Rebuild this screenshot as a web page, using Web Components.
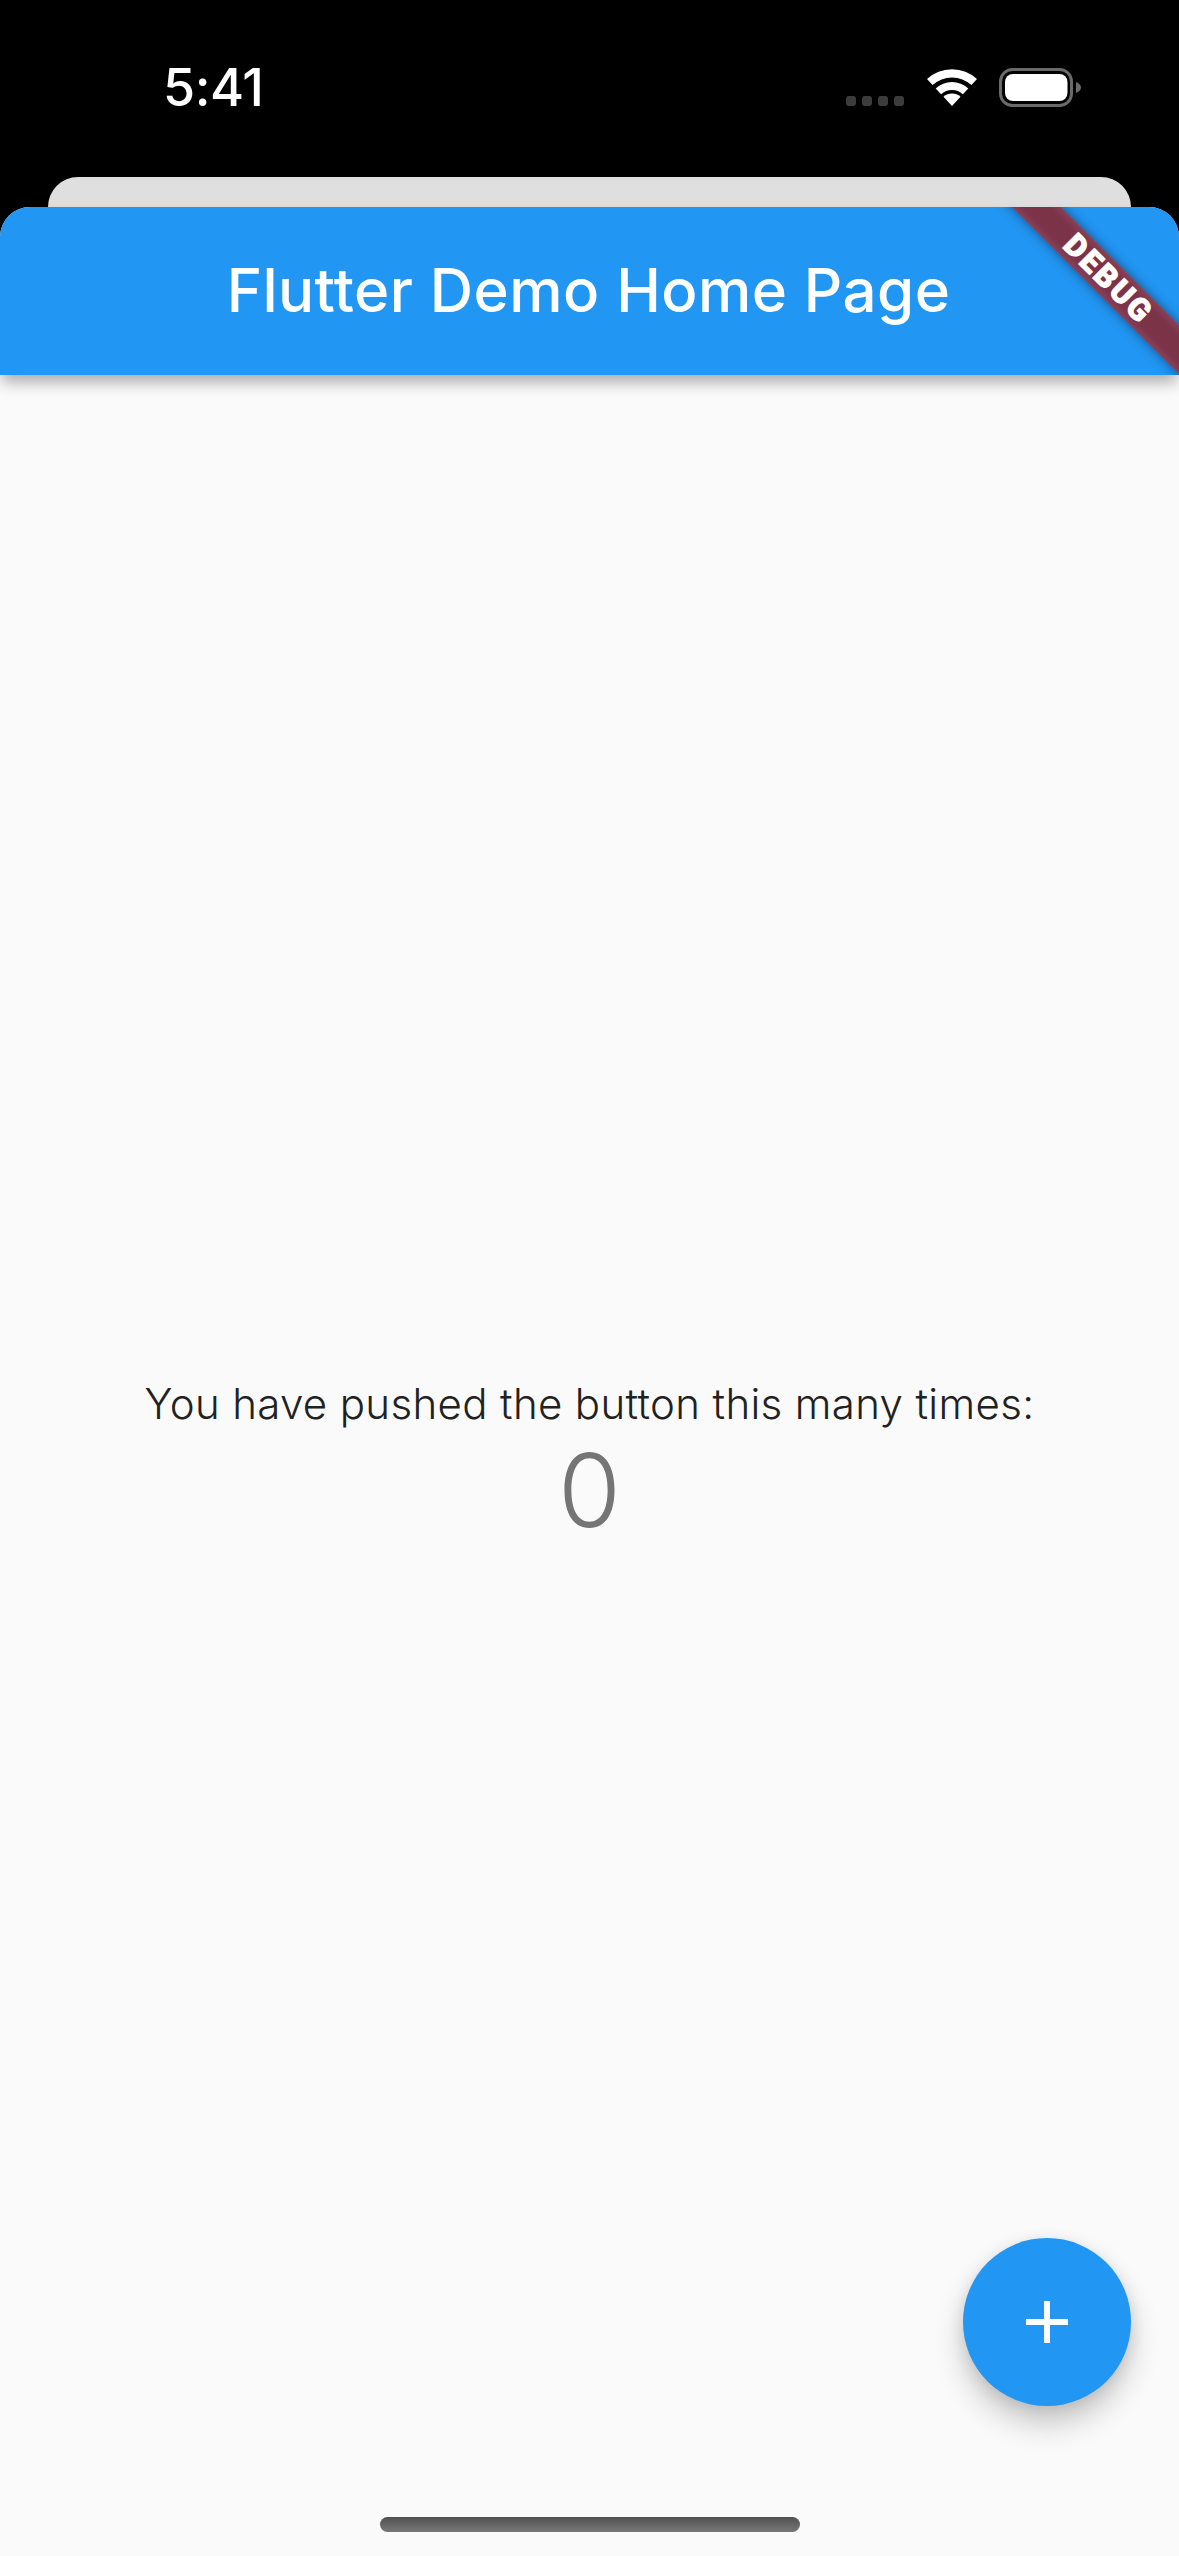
<!DOCTYPE html>
<html lang="en">
<head>
<meta charset="utf-8">
<title>Flutter Demo Home Page</title>
<style>
  html, body { margin: 0; background: #000; }
  body { font-family: "Inter", "Liberation Sans", sans-serif; }
</style>
</head>
<body>
<demo-page>
  <status-bar slot="status" time="5:41"></status-bar>
  <app-bar slot="bar">Flutter Demo Home Page</app-bar>
  <counter-view message="You have pushed the button this many times:" count="0"></counter-view>
  <fab-button slot="over"></fab-button>
  <home-indicator slot="over"></home-indicator>
</demo-page>

<script>
class DemoPage extends HTMLElement {
  constructor() {
    super();
    this.attachShadow({mode: "open"}).innerHTML = `
      <style>
        :host {
          display: flex;
          flex-direction: column;
          position: relative;
          height: 2556px;
          overflow: hidden;
          background: #000;
        }
        .peek {
          height: 30px;
          margin: 0 48px 0 48px;
          background: #dfdfdf;
          border-radius: 30px 30px 0 0;
          flex: none;
        }
        .sheet {
          flex: 1;
          display: flex;
          flex-direction: column;
          background: #fafafa;
          border-radius: 30px 30px 0 0;
          min-height: 0;
        }
        main {
          flex: 1;
          display: flex;
          flex-direction: column;
          align-items: center;
          justify-content: center;
        }
      </style>
      <slot name="status"></slot>
      <div class="peek"></div>
      <div class="sheet">
        <slot name="bar"></slot>
        <main><slot></slot></main>
      </div>
      <slot name="over"></slot>
    `;
  }
}

class StatusBar extends HTMLElement {
  constructor() {
    super();
    this.attachShadow({mode: "open"}).innerHTML = `
      <style>
        :host {
          display: flex;
          justify-content: space-between;
          align-items: flex-start;
          height: 177px;
          box-sizing: border-box;
          padding: 68px 98px 0 163px;
          color: #fff;
          flex: none;
        }
        .time {
          font-size: 52px;
          font-weight: 550;
          line-height: 63px;
          margin-top: -12px;
          letter-spacing: -0.5px;
        }
        .icons {
          display: flex;
          align-items: flex-end;
          gap: 23px;
          height: 39px;
        }
        .dots {
          display: flex;
          gap: 6px;
          margin-bottom: 1px;
        }
        .dots i {
          width: 10px;
          height: 10px;
          border-radius: 3px;
          background: #3c3c3c;
        }
        .wifi { display: block; width: 50px; height: 37px; margin-bottom: 1px; }
        .battery { display: block; width: 82px; height: 39px; margin-left: -1px; }
      </style>
      <span class="time"></span>
      <div class="icons">
        <div class="dots"><i></i><i></i><i></i><i></i></div>
        <svg class="wifi" viewBox="0 0 50 37" fill="#fff">
          <path d="M0 10A36.8 36.8 0 0 1 50 10L44.4 16.1A28.5 28.5 0 0 0 5.6 16.1Z"/>
          <path d="M8.7 19.4A24 24 0 0 1 41.3 19.4L35.9 25.3A16 16 0 0 0 14.1 25.3Z"/>
          <path d="M16.5 27.8A12.5 12.5 0 0 1 33.5 27.8L25 37Z"/>
        </svg>
        <svg class="battery" viewBox="0 0 82 39">
          <rect x="1.5" y="1.5" width="71" height="36" rx="12" fill="none" stroke="#6a6a6a" stroke-width="3"/>
          <rect x="6" y="6" width="62.5" height="27" rx="8" fill="#fff"/>
          <path d="M77 14C80 15 82 17 82 19.500C82 22 80 24 77 25Z" fill="#6a6a6a"/>
        </svg>
      </div>
    `;
  }
  connectedCallback() {
    this.shadowRoot.querySelector(".time").textContent = this.getAttribute("time");
  }
}

class AppBar extends HTMLElement {
  constructor() {
    super();
    this.attachShadow({mode: "open"}).innerHTML = `
      <style>
        :host {
          display: block;
          position: relative;
          flex: none;
          z-index: 1;
          height: 168px;
          color: #fff;
          background: #2196f3;
          border-radius: 30px 30px 0 0;
          box-shadow: 0 9px 15px -2px rgba(0, 0, 0, 0.32);
        }
        .title {
          display: flex;
          align-items: center;
          justify-content: center;
          height: 100%;
          padding-right: 2px;
          box-sizing: border-box;
          font-size: 60px;
          font-weight: 500;
          letter-spacing: 0.45px;
          margin-top: -1px;
        }
        .clip {
          position: absolute;
          inset: 0;
          overflow: hidden;
          border-radius: 30px 30px 0 0;
          pointer-events: none;
        }
      </style>
      <div class="title"><slot></slot></div>
      <div class="clip"><debug-banner></debug-banner></div>
    `;
  }
}

class DebugBanner extends HTMLElement {
  constructor() {
    super();
    this.attachShadow({mode: "open"}).innerHTML = `
      <style>
        :host {
          position: absolute;
          top: 53px;
          right: -128px;
          width: 400px;
          height: 35px;
          box-sizing: border-box;
          padding-left: 4px;
          display: flex;
          align-items: center;
          justify-content: center;
          transform: rotate(45deg);
          background: linear-gradient(#86415a, #7b3348 25%, #7b3348 75%, #86415a);
          box-shadow: 0 0 11px rgba(0, 0, 0, 0.45);
          color: #fff;
          font-family: "Roboto", "Noto Sans", sans-serif;
          font-size: 31px;
          font-weight: 900;
          letter-spacing: 2.5px;
          -webkit-text-stroke: 1px #fff;
        }
      </style>
      DEBUG
    `;
  }
}

class CounterView extends HTMLElement {
  constructor() {
    super();
    this.attachShadow({mode: "open"}).innerHTML = `
      <style>
        :host {
          display: flex;
          flex-direction: column;
          align-items: center;
        }
        .msg {
          font-size: 42px;
          font-weight: 350;
          line-height: 51px;
          color: #212121;
          letter-spacing: 0.35px;
          margin-top: -2px;
        }
        .count {
          font-size: 102px;
          font-weight: 350;
          line-height: 123px;
          color: #757575;
        }
      </style>
      <div class="msg"></div>
      <div class="count"></div>
    `;
  }
  connectedCallback() {
    this.shadowRoot.querySelector(".msg").textContent = this.getAttribute("message");
    this.shadowRoot.querySelector(".count").textContent = this.getAttribute("count");
  }
}

class FabButton extends HTMLElement {
  constructor() {
    super();
    this.attachShadow({mode: "open"}).innerHTML = `
      <style>
        :host {
          position: absolute;
          right: 48px;
          bottom: 150px;
          width: 168px;
          height: 168px;
          display: flex;
          align-items: center;
          justify-content: center;
          border-radius: 50%;
          background: #2196f3;
          box-shadow: 0 18px 30px rgba(0, 0, 0, 0.2), 0 3px 15px rgba(0, 0, 0, 0.1);
        }
        svg { display: block; width: 42px; height: 42px; }
      </style>
      <svg viewBox="0 0 42 42" fill="#fff"><path d="M18 0h6v18h18v6H24v18h-6V24H0v-6h18z"/></svg>
    `;
  }
}

class HomeIndicator extends HTMLElement {
  constructor() {
    super();
    this.attachShadow({mode: "open"}).innerHTML = `
      <style>
        :host {
          position: absolute;
          left: 380px;
          top: 2517px;
          width: 420px;
          height: 15px;
          border-radius: 8px;
          background: linear-gradient(#505050, #787878);
        }
      </style>
    `;
  }
}

customElements.define("demo-page", DemoPage);
customElements.define("status-bar", StatusBar);
customElements.define("app-bar", AppBar);
customElements.define("debug-banner", DebugBanner);
customElements.define("counter-view", CounterView);
customElements.define("fab-button", FabButton);
customElements.define("home-indicator", HomeIndicator);
</script>
</body>
</html>
